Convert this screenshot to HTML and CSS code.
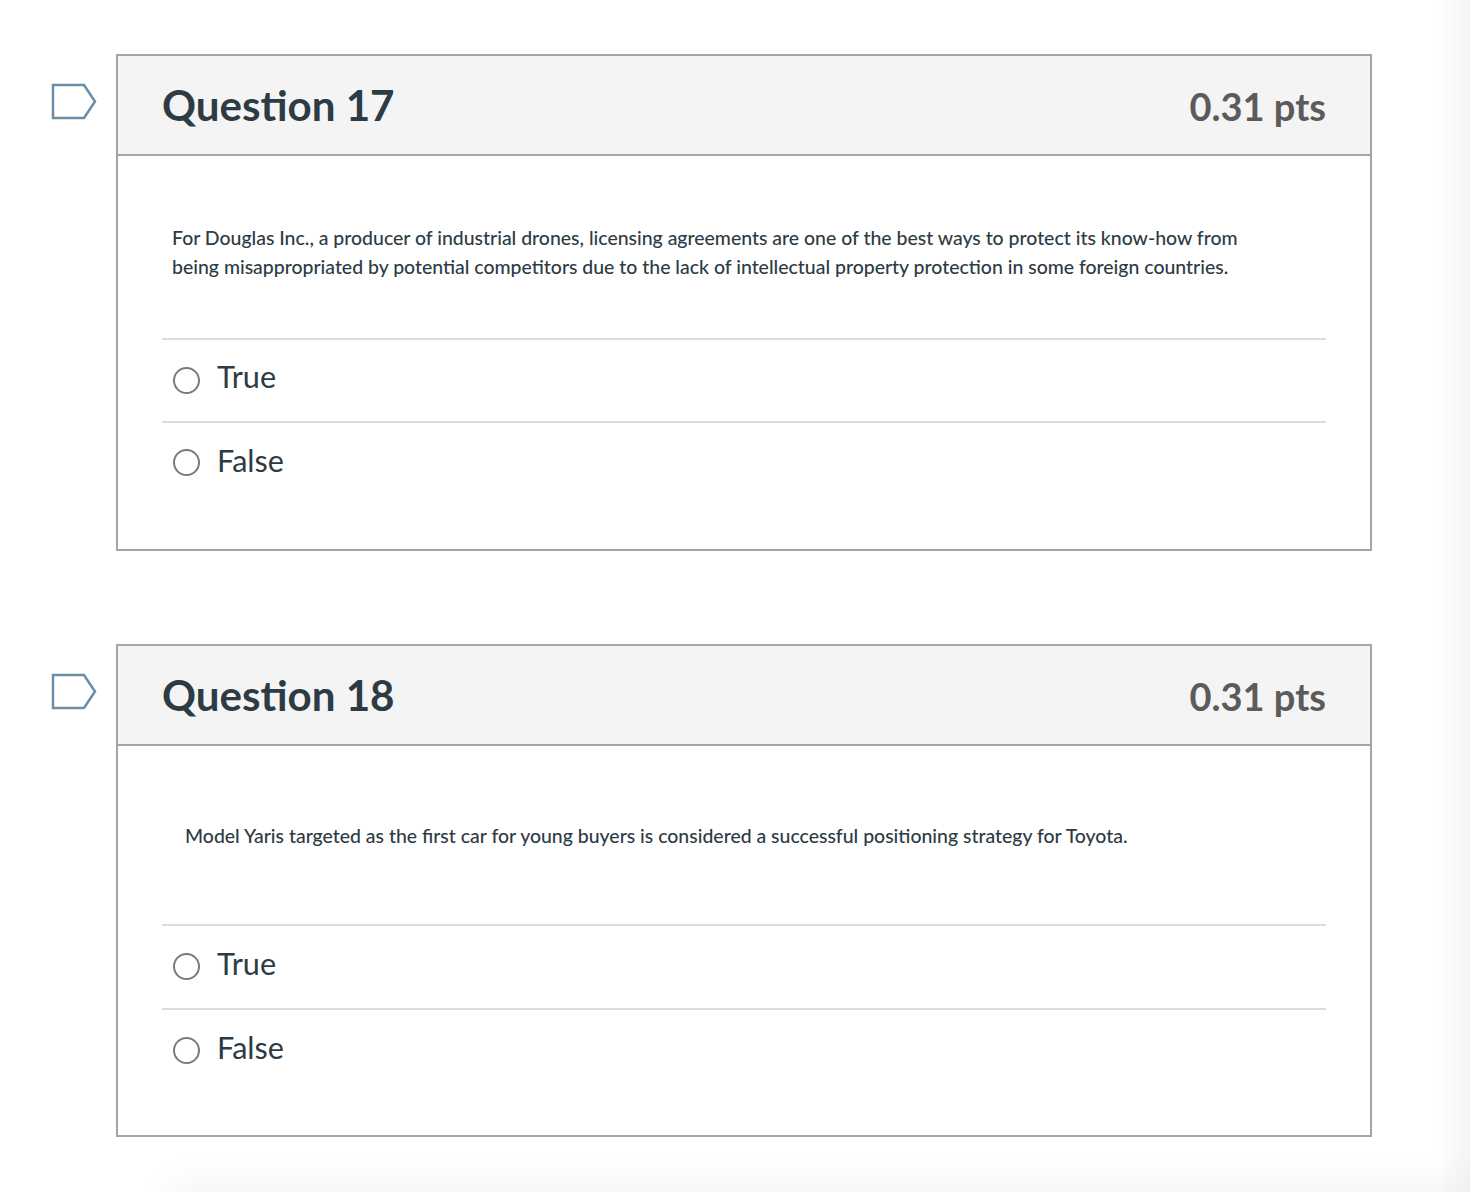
FILE: index.html
```html
<!DOCTYPE html>
<html lang="en">
<head>
<meta charset="utf-8">
<title>Quiz</title>
<link rel="stylesheet" href="styles.css">
</head>
<body>
<main class="quiz">
  <section class="card card-a">
    <svg class="flag" width="48" height="38" viewBox="0 0 48 38"><path d="M2 3H33L44 19.500 33 36H2Z" fill="#fff" stroke="#6b8ea6" stroke-width="2.500"/></svg>
    <header class="head"><h2 class="title">Question 17</h2><span class="pts">0.31 pts</span></header>
    <div class="body">
      <p class="text">For Douglas Inc., a producer of industrial drones, licensing agreements are one of the best ways to protect its know-how from being misappropriated by potential competitors due to the lack of intellectual property protection in some foreign countries.</p>
      <div class="answers">
        <div class="answer"><span class="radio"></span><span class="label">True</span></div>
        <div class="answer"><span class="radio"></span><span class="label">False</span></div>
      </div>
    </div>
  </section>
  <section class="card card-b">
    <svg class="flag" width="48" height="38" viewBox="0 0 48 38"><path d="M2 3H33L44 19.500 33 36H2Z" fill="#fff" stroke="#6b8ea6" stroke-width="2.500"/></svg>
    <header class="head"><h2 class="title">Question 18</h2><span class="pts">0.31 pts</span></header>
    <div class="body">
      <p class="text">Model Yaris targeted as the first car for young buyers is considered a successful positioning strategy for Toyota.</p>
      <div class="answers">
        <div class="answer"><span class="radio"></span><span class="label">True</span></div>
        <div class="answer"><span class="radio"></span><span class="label">False</span></div>
      </div>
    </div>
  </section>
</main>
<div class="edge-right"></div>
<div class="edge-bottom"></div>
</body>
</html>
```
FILE: styles.css
```css
* { box-sizing: border-box; }
html, body { margin: 0; height: 100%; background: #fff; overflow: hidden; }
body { font-family: Lato, "Liberation Sans", sans-serif; color: #2d3b45; }
.quiz { display: flex; flex-direction: column; gap: 93px; width: 1256px; margin-left: 116px; padding-top: 54px; }
.card { position: relative; border: 2px solid #a5a5a5; background: #fff; }
.flag { position: absolute; left: -67px; top: 26px; }
.head { display: flex; justify-content: space-between; align-items: center; height: 100px; padding: 0 44px; background: #f4f4f4; border-bottom: 2px solid #a5a5a5; }
.title { margin: 0; font-size: 42.1px; font-weight: 700; line-height: 100px; color: #2d3b45; }
.pts { margin-top: 1px; font-size: 38px; font-weight: 700; color: #5b5b5b; }
.body { padding: 68px 44px 0; }
.text { margin: 0; padding: 0 44px 57px 10px; font-size: 19.44px; font-weight: 500; line-height: 28.5px; color: #2d3b45; }
.card-b .body { padding-top: 76px; }
.card-b .text { padding: 0 0 73.5px 23px; }
.answer { display: flex; align-items: center; height: 83px; border-top: 2px solid #dcdcdc; padding-left: 11px; padding-bottom: 4px; }
.card-b .answer { height: 84px; }
.answer:last-child { height: 128px; align-items: flex-start; padding-top: 22px; }
.card-b .answer:last-child { height: 127px; padding-top: 23px; }
.radio { width: 27px; height: 27px; border: 2px solid #7a7a7a; border-radius: 50%; margin-top: 4px; flex: none; }
.card-b .answer .radio { margin-top: 3px; }
.card-b .answer:last-child .radio { margin-top: 4px; }
.label { margin-left: 17px; font-size: 30.6px; line-height: 40px; margin-top: -3px; }
.card-b .label { margin-top: -2px; }
.answer:last-child .label { margin-top: -4px; }
.card-b .answer:last-child .label { margin-top: -5px; }
.edge-right { position: fixed; top: 0; right: 0; bottom: 0; width: 34px; background: linear-gradient(to right, rgba(0,0,0,0), rgba(0,0,0,.045)); }
.edge-bottom { position: fixed; left: 180px; right: 0; bottom: -34px; height: 34px; box-shadow: 0 0 40px 8px rgba(0,0,0,.05); }
```
